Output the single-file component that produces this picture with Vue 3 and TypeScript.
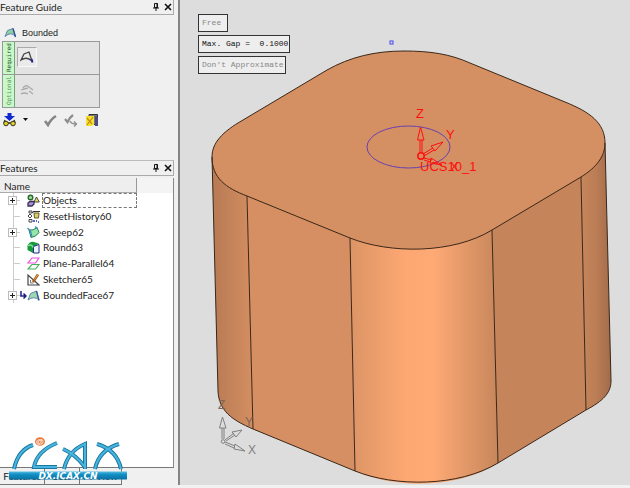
<script setup lang="ts">
import { ref } from 'vue'

interface Feature {
  name: string
  icon: string
  expandable: boolean
  active?: boolean
}

const features: Feature[] = [
  { name: 'Objects', icon: 'objects', expandable: true },
  { name: 'ResetHistory60', icon: 'reset', expandable: false },
  { name: 'Sweep62', icon: 'sweep', expandable: true },
  { name: 'Round63', icon: 'round', expandable: false },
  { name: 'Plane-Parallel64', icon: 'plane', expandable: false },
  { name: 'Sketcher65', icon: 'sketch', expandable: false },
  { name: 'BoundedFace67', icon: 'bounded', expandable: true, active: true },
]

const tabs: string[] = ['Features', 'Sets', 'M-View']
const selected = ref('Objects')
const currentTab = ref('Features')
</script>

<template>
  <div class="app">
    <aside class="side">
      <section class="guide">
        <header class="titlebar">
          <h2>Feature Guide</h2>
          <button class="tool" aria-label="Pin feature guide">
            <svg width="8" height="9" viewBox="0 0 8 9"><path d="M2.500 .5h3v4h-3zM5 .5v4M1 5h6M4 5v3" fill="none" stroke="#111" /></svg>
          </button>
          <button class="tool" aria-label="Close feature guide">
            <svg width="8" height="8" viewBox="0 0 8 8"><path d="M1 1l6 6M7 1L1 7" stroke="#111" stroke-width="1.6" /></svg>
          </button>
        </header>
        <div class="command">
          <svg width="13" height="12" viewBox="0 0 13 12"><path d="M1 9.500L3.500 3.500 9 1.500 11.500 9.500Q7 4 1 9.500z" fill="#8fd0a0" stroke="#5c86b0" /><path d="M9 1.500L11.500 10" stroke="#2d4a9a" stroke-width="1.300" /></svg>
          <span>Bounded</span>
        </div>
        <div class="steps">
          <div class="step">
            <span class="step-name required">Required</span>
            <button class="step-button pressed" aria-label="Pick boundary">
              <svg width="14" height="14" viewBox="0 0 14 14"><path d="M1 10L4 4 9 2 12 11Q7 6 1 10z" fill="none" stroke="#444" stroke-width="1.300" /><path d="M11.500 9l1 3.500" stroke="#2222a0" stroke-width="2" /></svg>
            </button>
          </div>
          <div class="step">
            <span class="step-name optional">Optional</span>
            <button class="step-button" aria-label="Pick constraints">
              <svg width="14" height="14" viewBox="0 0 14 14"><path d="M3 5Q6 1 9 4L13 7M1 7Q4 6 8 5M1 11Q4 9 8 11M9 8l4 3" fill="none" stroke="#aaa" stroke-width="1.300" /></svg>
            </button>
          </div>
        </div>
        <div class="actions">
          <button class="tool" aria-label="Preview">
            <svg width="13" height="14" viewBox="0 0 13 14"><path d="M4.500 0h4v3H12L6.500 8 1 3h3.500z" fill="#1226cf" /><path d="M2 7l-1 3M11 7l1 3M5 10h3" stroke="#332" stroke-width="1.500" /><circle cx="3" cy="10.500" r="2.300" fill="#dfd020" stroke="#332" /><circle cx="10" cy="10.500" r="2.300" fill="#dfd020" stroke="#332" /></svg>
          </button>
          <button class="tool drop" aria-label="Preview options">
            <svg width="5" height="4" viewBox="0 0 5 4"><path d="M0 0h5L2.500 3z" fill="#111" /></svg>
          </button>
          <button class="tool check" aria-label="OK">
            <svg width="13" height="13" viewBox="0 0 13 13"><path d="M1 7l3 4Q7 5 12 2" fill="none" stroke="#858585" stroke-width="2.600" /></svg>
          </button>
          <button class="tool" aria-label="Apply">
            <svg width="14" height="13" viewBox="0 0 14 13"><path d="M1 5l2.500 3Q5 4 9 1" fill="none" stroke="#8c8c8c" stroke-width="2.200" /><path d="M6 7q1 3 6 3M10 7.500l2.500 2.500L10 12.500" fill="none" stroke="#8c8c8c" stroke-width="1.300" /></svg>
          </button>
          <button class="tool" aria-label="Exit">
            <svg width="14" height="13" viewBox="0 0 14 13"><path d="M4 .5h8.500v10H4z" fill="#777" stroke="#333" /><path d="M1 2h8v9l-3 1H1z" fill="#f5e02c" /><path d="M2 4l5 6M8 3l-6 8" stroke="#c08a19" stroke-width="1.200" /><path d="M10 2v10h3V3z" fill="#4a4a85" /></svg>
          </button>
        </div>
      </section>

      <section class="browser">
        <header class="titlebar">
          <h2>Features</h2>
          <button class="tool" aria-label="Pin features">
            <svg width="8" height="9" viewBox="0 0 8 9"><path d="M2.500 .5h3v4h-3zM5 .5v4M1 5h6M4 5v3" fill="none" stroke="#111" /></svg>
          </button>
          <button class="tool" aria-label="Close features">
            <svg width="8" height="8" viewBox="0 0 8 8"><path d="M1 1l6 6M7 1L1 7" stroke="#111" stroke-width="1.6" /></svg>
          </button>
        </header>
        <div class="list">
          <div class="column-row"><div class="column">Name</div></div>
          <ul class="tree">
            <li v-for="f in features" :key="f.name">
              <span class="branch">
                <button v-if="f.expandable" class="expander" :aria-label="'Expand ' + f.name">
                  <svg width="5" height="5" viewBox="0 0 5 5"><path d="M0 2.500h5M2.500 0v5" stroke="#222" /></svg>
                </button>
              </span>
              <svg class="marker" width="7" height="9" viewBox="0 0 7 9"><path v-if="f.active" d="M1 0v5h4M3.500 2.500L6 5 3.500 7.500" fill="none" stroke="#1c1c80" stroke-width="1.500" /></svg>
              <svg class="icon" width="13" height="13" viewBox="0 0 13 13">
                <g v-if="f.icon === 'objects'"><circle cx="3.500" cy="3.500" r="2.300" fill="#a5d9a5" stroke="#276b2b" stroke-width="1.400" /><path d="M9.500 3L12.300 8H7z" fill="#e6df5a" stroke="#444" /><path d="M1 9l2-1.500h4V10l-2 2H1z" fill="#a793c5" stroke="#3b2a60" stroke-width="1.300" /></g>
                <g v-else-if="f.icon === 'reset'" fill="none"><path d="M2 1h3v2H2zM1 6l2-2 2 2-2 2zM2 9.500h3v2.500H2z" stroke="#444" /><path d="M7 3h5l-.5 5h-4z" fill="#d8d070" stroke="#665d20" /><path d="M6 1.500h7M5 3l2-1.500" stroke="#333" /><path d="M6 11h2M9 11h1M11 12h1" stroke="#2a35c5" stroke-width="1.500" /></g>
                <g v-else-if="f.icon === 'sweep'"><path d="M2 4q4 1 8-2.500l2 5Q9 11 4 11.500z" fill="#95e5ab" stroke="#238050" /><path d="M.5 2l3 3 1.500 6M8 .5l2.500 2" fill="none" stroke="#3b8fc5" stroke-width="1.300" /></g>
                <g v-else-if="f.icon === 'round'"><path d="M.5 4.500Q2 1 6 .8L12 2.500 6 6v6L.5 9z" fill="#159b3a" /><path d="M6.500 5.500L12 3.500V12H6.500z" fill="#eef3ff" stroke="#222a85" /><path d="M1 4.500Q5 3 6 6.500" fill="none" stroke="#83df94" stroke-width="1.500" /></g>
                <g v-else-if="f.icon === 'plane'" fill="none"><path d="M5 1h7L8.500 6H1z" stroke="#e84fdc" stroke-width="1.200" /><path d="M5 7.500h7L8.500 12H1z" stroke="#44b45a" stroke-width="1.200" /></g>
                <g v-else-if="f.icon === 'sketch'" fill="none"><path d="M1 2v10h11z" stroke="#444" stroke-width="1.200" /><path d="M3.500 7v3h3" stroke="#777" /><path d="M6 9L11 1.500" stroke="#a55a20" stroke-width="2.600" /><path d="M7.500 6.500L11 1.500" stroke="#e6b44c" /></g>
                <g v-else><path d="M1 11L3.500 4.500 9.500 2 12 11Q7 6.500 1 11z" fill="#9cd7b0" stroke="#6488ac" /><path d="M9.500 2L12 11.500" stroke="#34579a" stroke-width="1.300" /></g>
              </svg>
              <button class="label" :class="{ focused: selected === f.name }" @click="selected = f.name">{{ f.name }}</button>
            </li>
          </ul>
        </div>
        <nav class="tabs">
          <button v-for="t in tabs" :key="t" :class="{ current: currentTab === t }" @click="currentTab = t">{{ t }}</button>
        </nav>
        <svg class="logo" width="120" height="46" viewBox="8 435 120 46" role="img" aria-label="iCAX">
          <defs>
            <linearGradient id="bar" x1="0" y1="0" x2="0" y2="1"><stop offset="0" stop-color="#54bce0" /><stop offset=".35" stop-color="#1490c5" /><stop offset="1" stop-color="#0871a3" /></linearGradient>
          </defs>
          <g fill="none" stroke="#1878a3" stroke-width="4">
            <path d="M14 469Q18 450 33 445" /><path d="M57 443Q37 451 34 467H57" /><path d="M64 469Q68 451 85 444V469M63 449Q75 454 85 467" /><path d="M97 444Q117 450 121 469M119 444Q99 450 95 469" />
          </g>
          <g fill="none" stroke="#49b5de" stroke-width="2">
            <path d="M14 469Q18 450 33 445" /><path d="M57 443Q37 451 34 467H57" /><path d="M64 469Q68 451 85 444V469M63 449Q75 454 85 467" /><path d="M97 444Q117 450 121 469M119 444Q99 450 95 469" />
          </g>
          <ellipse cx="40" cy="441.500" rx="5" ry="4.300" fill="#e9793a" />
          <text x="40" y="444" class="at">@</text>
          <rect x="9" y="471.500" width="118" height="8" fill="url(#bar)" />
          <text x="68" y="478.500" class="site">DX.ICAX.CN</text>
        </svg>
      </section>
    </aside>

    <main class="viewport">
      <svg class="scene" viewBox="180 0 450 485" preserveAspectRatio="xMinYMin meet" role="img" aria-label="Rounded block model">
        <defs>
          <linearGradient id="lc"><stop offset="0" stop-color="#b77a54" /><stop offset="1" stop-color="#d48e61" /></linearGradient>
          <linearGradient id="mid"><stop offset="0" stop-color="#dc9465" /><stop offset=".38" stop-color="#fda873" /><stop offset=".56" stop-color="#ffaa75" /><stop offset="1" stop-color="#c6865b" /></linearGradient>
          <linearGradient id="rc"><stop offset="0" stop-color="#c7865b" /><stop offset=".5" stop-color="#bb7d55" /><stop offset="1" stop-color="#a26c4a" /></linearGradient>
        </defs>
        <path d="M212 157L218 391C219 411 232 420 253 429L247 190z" fill="url(#lc)" />
        <path d="M247 190L350 232 355 471 253 429z" fill="#d68f62" />
        <path d="M350 235C390 245 453 245 492 225L498 463C458 489 395 489 355 471z" fill="url(#mid)" />
        <path d="M492 225L581 172 586 410 498 463z" fill="#c6845b" />
        <path d="M581 172L605 143 611 381C611 393 603 401 586 410z" fill="url(#rc)" />
        <path d="M212 157C212 178 226 188 247 196L350 238C390 254 453 254 492 230L581 177C597 167 605 156 605 143C605 123 590 112 565 102L470 63C450 54 430 51 404 51C375 51 350 57 327 70L243 120C222 132 212 143 212 157z" fill="#d48f62" stroke="#3a2719" />
        <path d="M212 157L218 391C219 411 232 420 253 429L355 471C395 487 458 487 498 463L586 410C603 401 611 393 611 381L605 143M247 196L253 429M350 238L355 471M492 230L498 463M581 177L586 410" fill="none" stroke="#3a2719" />
        <rect x="390" y="41" width="3" height="3" fill="#dde" stroke="#4545ef" />
        <ellipse cx="408.500" cy="147" rx="41.500" ry="21" fill="none" stroke="#6841b1" />
        <g fill="none" stroke="#ff1010">
          <circle cx="421" cy="156" r="3.200" stroke-width="1.500" />
          <path d="M420 153V140M422 153V140M417.500 140L420.500 127L424 140zM423 154L433 148M424 156L434 150M443 142L431 146L435 151zM424 158L432 160M424 160L431 162M442 165L431 158L430 163z" />
        </g>
        <g class="red"><text x="416" y="118">Z</text><text x="446" y="139">Y</text><text x="450" y="171">X</text><text x="420" y="171">UCS10_1</text></g>
        <g fill="none" stroke="#808080">
          <circle cx="223" cy="441.500" r="1.800" />
          <path d="M222 439V428M224 439V428M219.500 428L222.500 417L226 428zM225 440L234 433M226 441L235 435M242 430L232 432L236 437zM225 442L235 446M225 444L234 448M245 451L235 444L234 449z" />
        </g>
        <g class="gray"><text x="218" y="409" class="faint">Z</text><text x="245" y="426" class="faint">Y</text><text x="248" y="454">X</text></g>
      </svg>
      <div class="options">
        <button class="dim">Free</button>
        <button>Max. Gap =&nbsp; 0.1000</button>
        <button class="dim">Don't Approximate</button>
      </div>
    </main>
  </div>
</template>

<style>
body {
  background: #f7f7f7;
}
</style>

<style scoped>
.app {
  display: grid;
  grid-template-columns: 180px 1fr;
  min-height: 100vh;
  box-sizing: border-box;
  padding-bottom: 3px;
  font-family: Lato, 'Noto Sans', sans-serif;
  font-size: 10px;
  line-height: 14px;
  color: #222;
  background: #f1f1f1;
}
button {
  font: inherit;
  color: inherit;
  margin: 0;
  padding: 0;
  border: 0;
  background: none;
}
svg {
  display: block;
}
.side {
  display: flex;
  flex-direction: column;
  box-sizing: border-box;
  padding-right: 4px;
  border-right: 2px solid #858585;
  background: #f0f0f0;
}
.titlebar {
  display: flex;
  align-items: center;
  gap: 4px;
  height: 14px;
  padding-right: 1px;
  border-right: 1px solid #aaa;
  border-bottom: 1px solid #aaa;
}
.titlebar h2 {
  flex: 1;
  margin: 0;
  font-size: 10px;
  font-weight: 400;
}
.guide {
  min-height: 160px;
}
.command {
  display: flex;
  align-items: center;
  gap: 5px;
  padding: 11px 0 1px 4px;
  font-family: 'Liberation Sans', sans-serif;
  font-size: 9px;
}
.steps {
  width: 96px;
  margin-left: 2px;
  border: 1px solid #999;
  background: #e3e3e3;
}
.step {
  display: flex;
  height: 32px;
}
.step + .step {
  border-top: 1px solid #999;
}
.step-name {
  width: 11px;
  border-left: 1px solid #77a477;
  background: #c8fac8;
  writing-mode: vertical-rl;
  transform: rotate(180deg);
  text-align: center;
  font-family: 'DejaVu Sans Mono', monospace;
  font-size: 6px;
  line-height: 11px;
}
.required {
  color: #1f4a1f;
}
.optional {
  color: #5f8a5f;
}
.step-button {
  display: grid;
  place-items: center;
  width: 20px;
  height: 20px;
  margin: 5px 2px;
  border: 1px solid transparent;
}
.pressed {
  border-color: #aaa #f8f8f8 #f8f8f8 #aaa;
  background: #eaeaea;
}
.actions {
  display: flex;
  align-items: center;
  gap: 7px;
  padding: 5px 3px;
}
.check {
  margin: 0 0 0 9px;
}
.browser {
  position: relative;
  flex: 1;
  display: flex;
  flex-direction: column;
}
.browser .titlebar {
  border-top: 1px solid #bbb;
}
.list {
  flex: 1;
  margin-top: 2px;
  border-right: 1px solid #888;
  border-bottom: 1px solid #777;
  background: #fff;
}
.column-row {
  background: #f4f4f4;
}
.column {
  box-sizing: border-box;
  width: 137px;
  height: 15px;
  padding-left: 4px;
  border-right: 1px solid #999;
  border-bottom: 1px solid #aaa;
  line-height: 16px;
  background: #eee;
}
.tree {
  display: grid;
  grid-template-rows: repeat(7, 1fr);
  height: 110px;
  margin: 0;
  padding: 0;
  list-style: none;
}
.tree li {
  display: flex;
  align-items: center;
  min-height: 0;
}
.branch {
  display: flex;
  align-items: center;
  align-self: stretch;
  width: 12px;
  padding-left: 8px;
  background:
    linear-gradient(#ccc, #ccc) 13px 50% / 7px 1px no-repeat,
    linear-gradient(#ccc, #ccc) 13px 0 / 1px 100% no-repeat;
}
.expander {
  display: grid;
  place-items: center;
  flex: none;
  width: 9px;
  height: 9px;
  border: 1px solid #bbb;
  background: #fff;
  box-sizing: border-box;
}
.icon {
  margin-right: 2px;
}
.label {
  padding-right: 2px;
  border: 1px dotted transparent;
  line-height: 13px;
  text-align: left;
}
.focused {
  width: 95px;
  border: 1px dashed #777;
}
.tabs {
  display: flex;
  height: 17px;
}
.tabs button {
  box-sizing: border-box;
  min-width: 35px;
  padding: 0 3px;
  border-right: 1px solid #777;
  border-bottom: 1px solid #777;
}
.tabs .current {
  min-width: 45px;
  padding: 0 2px;
}
.tabs button:last-child {
  min-width: 41px;
}
.logo {
  position: absolute;
  left: 8px;
  bottom: 4px;
}
.at {
  font: bold 8px 'Liberation Sans', sans-serif;
  fill: #fff;
  text-anchor: middle;
}
.site {
  font: italic bold 9px 'DejaVu Sans', sans-serif;
  fill: #fff;
  text-anchor: middle;
}
.viewport {
  position: relative;
  background: #dddddd;
}
.scene {
  width: 100%;
}
.red {
  font: 13px 'Liberation Sans', sans-serif;
  fill: #ff1010;
}
.gray {
  font: 12px 'Liberation Sans', sans-serif;
  fill: #808080;
}
.faint {
  fill: #80655a;
}
.options {
  position: absolute;
  top: 14px;
  left: 18px;
  display: flex;
  flex-direction: column;
  align-items: flex-start;
  gap: 3px;
}
.options button {
  box-sizing: border-box;
  min-width: 30px;
  height: 18px;
  padding: 0 1px 0 3px;
  border: 1px solid #333;
  background: #eee;
  font-family: 'Liberation Mono', monospace;
  font-size: 8px;
  text-align: left;
  color: #111;
}
.options .dim {
  color: #888;
}
</style>
